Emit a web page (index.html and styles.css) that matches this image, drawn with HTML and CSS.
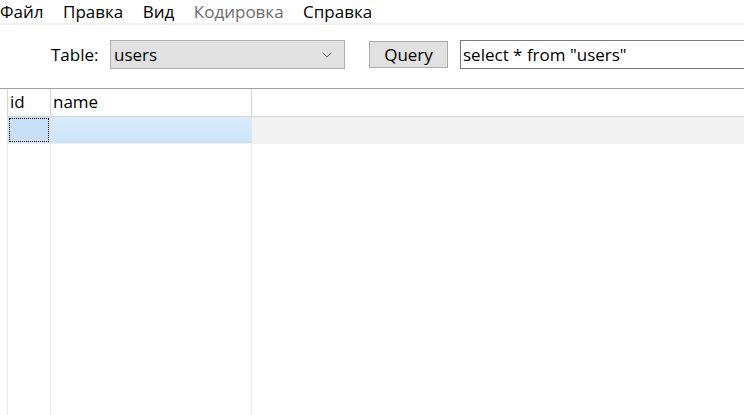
FILE: index.html
```html
<!DOCTYPE html>
<html>
<head>
<meta charset="utf-8">
<link rel="stylesheet" href="styles.css">
</head>
<body>
<div class="window">
  <nav class="menubar">
    <span class="menu-item">Файл</span>
    <span class="menu-item">Правка</span>
    <span class="menu-item">Вид</span>
    <span class="menu-item disabled">Кодировка</span>
    <span class="menu-item">Справка</span>
  </nav>
  <div class="toolbar">
    <span class="label">Table:</span>
    <div class="combo">
      <span class="combo-text">users</span>
      <svg class="combo-arrow" width="10" height="6" viewBox="0 0 10 6"><path d="M0.5 0.5 L5 5 L9.5 0.5" fill="none" stroke="#6a6a6a" stroke-width="1"/></svg>
    </div>
    <button class="btn">Query</button>
    <div class="textbox">select * from "users"</div>
  </div>
  <div class="grid">
    <div class="gutter"></div>
    <div class="cell head">id</div>
    <div class="cell head">name</div>
    <div class="cell head rest"></div>

    <div class="gutter"></div>
    <div class="cell row sel-id"><span class="focus"></span></div>
    <div class="cell row sel"></div>
    <div class="cell row rest-row"></div>

    <div class="gutter"></div>
    <div class="cell fill"></div>
    <div class="cell fill"></div>
    <div class="cell fill"></div>
  </div>
</div>
</body>
</html>
```

FILE: styles.css
```css
* { box-sizing: border-box; }
html, body { margin: 0; padding: 0; background: #fff; }
body {
  font-family: "Open Sans", "Noto Sans", sans-serif;
  font-size: 17px;
  color: #000;
  width: 744px;
  height: 415px;
  overflow: hidden;
}
.window { display: flex; flex-direction: column; height: 415px; }
.menubar {
  display: flex;
  gap: 19.5px;
  align-items: center;
  height: 25px;
  border-bottom: 2px solid #f0f0f0;
  padding-left: 0;
}
.menu-item { line-height: 22px; }
.menu-item.disabled { color: #6d6d6d; }
.toolbar {
  display: flex;
  align-items: center;
  height: 64px;
  padding-left: 51px;
  border-bottom: 1px solid #a0a0a0;
  padding-bottom: 4px;
}
.label { width: 59px; }
.combo {
  width: 235px;
  height: 29px;
  background: #e1e1e1;
  border: 1px solid #adadad;
  display: flex;
  align-items: center;
  justify-content: space-between;
  padding: 0 12px 0 3px;
}
.btn {
  margin-left: 24px;
  width: 79px;
  height: 27px;
  background: #e1e1e1;
  border: 1px solid #adadad;
  font: inherit;
  color: #000;
  padding: 0;
}
.textbox {
  margin-left: 12px;
  flex: 1;
  height: 29px;
  border: 1px solid #7a7a7a;
  border-right: none;
  display: flex;
  align-items: center;
  padding-left: 2px;
  white-space: nowrap;
}
.grid {
  flex: 1;
  display: grid;
  grid-template-columns: 7px 43px 201px 1fr;
  grid-template-rows: 28px 27px 1fr;
}
.cell { border-left: 1px solid #e3e3e3; }
.head {
  border-left-color: #d5d5d5;
  border-bottom: 1px solid #d5d5d5;
  padding-left: 2px;
  line-height: 26px;
}
.row { border-bottom: 1px solid #f0f0f0; border-left-color: #e6e6e6; }
.sel-id { background: #c9dff5; padding: 1px; }
.focus { display: block; height: 100%; border: 1px dotted #000; }
.sel { background: linear-gradient(#d9ebfc, #cce4f9); }
.rest-row { background: #f2f2f2; }
.fill { border-left-color: #ebebeb; }
```
